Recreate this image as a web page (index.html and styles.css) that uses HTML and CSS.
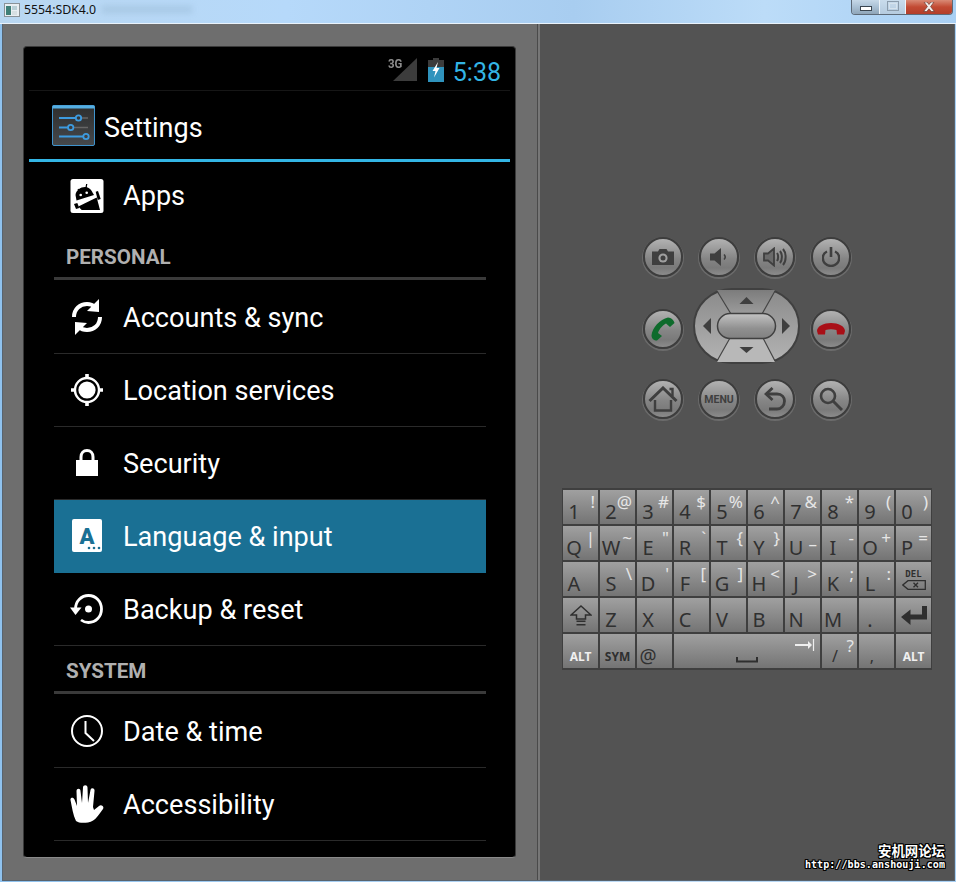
FILE: index.html
```html
<!DOCTYPE html>
<html lang="en">
<head>
    <meta charset="UTF-8">
    <meta name="viewport" content="width=device-width, initial-scale=1.0">
    <title>5554:SDK4.0</title>
    <link rel="stylesheet" href="styles.css">
</head>
<body>

<!-- Window title bar -->
<header class="titlebar">
    <svg class="app-icon" width="16" height="16" viewBox="0 0 16 16"><rect x="0.5" y="1.5" width="15" height="13" fill="#e8eef2" stroke="#8a9298"/><rect x="2" y="4" width="5" height="9" fill="#3f7f78"/><rect x="8" y="4" width="5" height="4" fill="#b9cfd6"/><rect x="8" y="9" width="5" height="4" fill="#d6dfe2"/></svg>
    <span class="title-text">5554:SDK4.0</span>
    <span class="title-smudge"></span>
    <div class="win-buttons">
        <div class="win-btn win-min"><span class="min-glyph"></span></div>
        <div class="win-btn win-max"><span class="max-glyph"></span></div>
        <div class="win-btn win-close">
            <svg width="14" height="10" viewBox="0 0 14 10"><path d="M2 0 L5 0 L7 2.5 L9 0 L12 0 L8.6 4.6 L12.4 9.5 L9.2 9.5 L7 6.8 L4.8 9.5 L1.6 9.5 L5.4 4.6 Z" fill="#f4f0ee" stroke="#6b3a30" stroke-width="0.7"/></svg>
        </div>
    </div>
</header>

<div class="window">

    <!-- Device screen -->
    <section class="device">
        <div class="screen">
            <div class="statusbar">
                <span class="net-label">3G</span>
                <svg class="signal" width="24" height="23" viewBox="0 0 24 23"><path d="M0 23 L24 0 L24 23 Z" fill="#3c3c3c"/></svg>
                <svg class="battery" width="16" height="24" viewBox="0 0 16 24"><path d="M5 0 H11 V2 H16 V24 H0 V2 H5 Z" fill="#3c3c3c"/><path d="M0 9 H16 V24 H0 Z" fill="#2f93bd"/><path d="M10 4 L4.5 13 H7.5 L6 19.5 L11.5 10 H8.5 Z" fill="#fff"/></svg>
                <span class="clock">5:38</span>
            </div>

            <div class="actionbar">
                <svg class="settings-icon" width="43" height="41" viewBox="0 0 43 41">
                    <defs><linearGradient id="setbg" x1="0" y1="0" x2="0" y2="1"><stop offset="0" stop-color="#2e2e2e"/><stop offset="1" stop-color="#45484b"/></linearGradient></defs>
                    <rect x="0.5" y="0.5" width="42" height="40" rx="1.5" fill="url(#setbg)" stroke="#3f93cc"/>
                    <rect x="0.5" y="0.5" width="42" height="3" fill="#55aee2"/>
                    <g stroke="#666" stroke-width="1.400"><path d="M29 13 H36"/><path d="M21 22.500 H36"/></g>
                    <g stroke="#3d9be0" stroke-width="1.800" fill="none">
                        <path d="M7 13 H24"/><path d="M7 22.500 H16"/><path d="M7 31.500 H32"/>
                        <circle cx="26.500" cy="13" r="2.700"/><circle cx="18.700" cy="22.500" r="2.700"/><circle cx="34" cy="31.500" r="2.700"/>
                    </g>
                </svg>
                <span class="actionbar-title">Settings</span>
            </div>

            <div class="list">
                <div class="row row-first">
                    <svg class="row-icon" width="34" height="34" viewBox="0 0 34 34">
                        <rect x="0.500" y="0" width="33" height="34" rx="2.500" fill="#fff"/>
                        <path d="M6.500 21.500 L5.500 16 C6 11.500 10.500 8 15 8 C18.500 8 21.500 10.500 22.500 13.500 L24 16 Z" fill="#000"/>
                        <path d="M8.300 27.500 L26.700 18.500 L30 31 H11.700 Z" fill="#000"/>
                        <path d="M25.700 12.700 L28 12 L30.700 20 L27.700 21 Z" fill="#000"/>
                        <path d="M4 25 L7.300 24 L9.300 29 L6 30 Z" fill="#000"/>
                        <path d="M8 10 L10 13 M16.700 5 L16 9" stroke="#000" stroke-width="1.300"/>
                        <circle cx="10.700" cy="16" r="1.300" fill="#fff"/><circle cx="16.700" cy="13.700" r="1.300" fill="#fff"/>
                    </svg>
                    <span class="row-label row-label-first">Apps</span>
                </div>

                <div class="list-header list-header-first">PERSONAL</div>

                <div class="row">
                    <svg class="row-icon" width="34" height="36" viewBox="0 0 34 36">
                        <path d="M4 18 C4 10 10 5 17 5 C20 5 23 6 25 8" fill="none" stroke="#fff" stroke-width="4"/>
                        <path d="M29 0 L29 13 L17 12 Z" fill="#fff"/>
                        <path d="M30 18 C30 26 24 31 17 31 C14 31 11 30 9 28" fill="none" stroke="#fff" stroke-width="4"/>
                        <path d="M5 36 L5 23 L17 24 Z" fill="#fff"/>
                    </svg>
                    <span class="row-label">Accounts &amp; sync</span>
                </div>
                <div class="row">
                    <svg class="row-icon" width="34" height="34" viewBox="0 0 34 34">
                        <circle cx="17" cy="17" r="12" fill="none" stroke="#fff" stroke-width="2.400"/>
                        <circle cx="17" cy="17" r="8.600" fill="#fff"/>
                        <path d="M17 1 V6 M17 28 V33 M1 17 H6 M28 17 H33" stroke="#fff" stroke-width="3.600"/>
                    </svg>
                    <span class="row-label">Location services</span>
                </div>
                <div class="row">
                    <svg class="row-icon" width="34" height="30" viewBox="0 0 34 30">
                        <path d="M11 14 V9 C11 5 13.500 2.500 17 2.500 C20.500 2.500 23 5 23 9 V14" fill="none" stroke="#fff" stroke-width="3"/>
                        <rect x="6" y="12" width="22" height="16" fill="#fff"/>
                    </svg>
                    <span class="row-label">Security</span>
                </div>
                <div class="row row-active">
                    <svg class="row-icon" width="34" height="34" viewBox="0 0 34 34">
                        <rect x="2" y="0" width="30" height="33" rx="2" fill="#fff"/>
                        <text x="17" y="25" class="lang-glyph">A</text>
                        <circle cx="19" cy="29" r="1.300" fill="#1a7094"/><circle cx="24" cy="29" r="1.300" fill="#1a7094"/><circle cx="29" cy="29" r="1.300" fill="#1a7094"/>
                    </svg>
                    <span class="row-label">Language &amp; input</span>
                </div>
                <div class="row">
                    <svg class="row-icon" width="34" height="32" viewBox="0 0 34 32">
                        <path d="M5.500 16 C5.500 8 11.500 2.500 18.500 2.500 C26 2.500 31.500 8.500 31.500 16 C31.500 23.500 26 29.500 18.500 29.500 C15.500 29.500 13 28.500 11 27" fill="none" stroke="#fff" stroke-width="2.800"/>
                        <path d="M0 14.500 H11.500 L5.500 22 Z" fill="#fff"/>
                        <circle cx="18.500" cy="16" r="3.500" fill="#fff"/>
                    </svg>
                    <span class="row-label">Backup &amp; reset</span>
                </div>

                <div class="list-header">SYSTEM</div>

                <div class="row">
                    <svg class="row-icon" width="34" height="34" viewBox="0 0 34 34">
                        <circle cx="17" cy="17" r="15" fill="none" stroke="#fff" stroke-width="2"/>
                        <path d="M15.500 7 V19 L24 27" fill="none" stroke="#fff" stroke-width="2"/>
                    </svg>
                    <span class="row-label">Date &amp; time</span>
                </div>
                <div class="row">
                    <svg class="row-icon" width="34" height="38" viewBox="0 0 34 38">
                        <path d="M6 36 C3 30 2 22 0.500 15 C0 12.500 3.500 12 4.500 14.500 L7 21 L6.500 6 C6.500 3 10.500 3 10.500 6 L12 18 L13 2.500 C13 -0.500 17.500 -0.500 17.500 2.500 L18 18 L20.500 5 C21 2 25 3 24.500 6 L23 22 L24 25 L29 21 C31.500 19 34.500 22 33 24 C29 29 26 36 18 37.500 C13 38.200 8.500 38 6 36 Z" fill="#fff"/>
                    </svg>
                    <span class="row-label">Accessibility</span>
                </div>
            </div>
        </div>
    </section>

    <!-- Emulator hardware controls -->
    <section class="controls">
        <div class="hw-buttons">
            <div class="hw-btn">
                <svg width="22" height="16" viewBox="0 0 22 16"><path d="M0 2.500 H6 L7.500 0 H14.500 L16 2.500 H22 V16 H0 Z" fill="#3f3f3f"/><circle cx="11" cy="9" r="4.600" fill="#a0a0a0"/><circle cx="11" cy="9" r="2.500" fill="#3f3f3f"/></svg>
            </div>
            <div class="hw-btn">
                <svg width="18" height="18" viewBox="0 0 18 18"><path d="M0 5.500 H4.500 L11 0 V18 L4.500 12.500 H0 Z" fill="#3f3f3f"/><path d="M14 6.500 C15.500 8 15.500 10 14 11.500" fill="none" stroke="#3f3f3f" stroke-width="1.500"/></svg>
            </div>
            <div class="hw-btn">
                <svg width="24" height="20" viewBox="0 0 24 20"><path d="M1 6.500 H5 L11 1.500 V18.500 L5 13.500 H1 Z" fill="#6a6a6a" stroke="#3f3f3f" stroke-width="1.800"/><path d="M14 6 C15.500 8 15.500 12 14 14 M17 4 C19.500 7 19.500 13 17 16 M20 2 C23.500 6 23.500 14 20 18" fill="none" stroke="#3f3f3f" stroke-width="2"/></svg>
            </div>
            <div class="hw-btn">
                <svg width="18" height="20" viewBox="0 0 18 20"><path d="M5 4.500 C1.500 6 0.800 9 0.800 11 C0.800 15.500 4.500 19 9 19 C13.500 19 17.200 15.500 17.200 11 C17.200 9 16.500 6 13 4.500" fill="none" stroke="#3f3f3f" stroke-width="2.400"/><path d="M9 0 V10" stroke="#3f3f3f" stroke-width="2.600"/></svg>
            </div>

            <div class="hw-btn">
                <svg width="24" height="24" viewBox="0 0 24 24"><path d="M17 0.500 C20 0.800 23 3 23.500 6 L19 10 L15 6.500 C13 7 8 12 7 16 L11 19 L6 23.500 C3 23.500 0.500 21.500 0.500 18.500 C1 11 9 2 17 0.500 Z" fill="#0e6b2c"/></svg>
            </div>
            <div class="dpad">
                <svg width="107" height="76" viewBox="0 0 107 76">
                    <defs>
                        <linearGradient id="dpadbg" x1="0" y1="0" x2="0" y2="1"><stop offset="0" stop-color="#8a8a8a"/><stop offset="1" stop-color="#b4b4b4"/></linearGradient>
                        <linearGradient id="dpadtop" x1="0" y1="0" x2="0" y2="1"><stop offset="0" stop-color="#7c7c7c"/><stop offset="1" stop-color="#9c9c9c"/></linearGradient>
                        <linearGradient id="pill" x1="0" y1="0" x2="0" y2="1"><stop offset="0" stop-color="#c4c4c4"/><stop offset="0.600" stop-color="#909090"/><stop offset="1" stop-color="#808080"/></linearGradient>
                    </defs>
                    <rect x="1" y="1" width="105" height="74" rx="38" ry="37" fill="url(#dpadbg)" stroke="#404040" stroke-width="2"/>
                    <path d="M24 2 H82 L69 26 H38 Z" fill="url(#dpadtop)"/>
                    <path d="M37 50 H70 L82 74 H24 Z" fill="#b8b8b8"/>
                    <path d="M24 3 L38 26 M82 3 L69 26 M37 50 L24 73 M70 50 L82 73" stroke="#454545" stroke-width="1.200" fill="none"/>
                    <rect x="24.500" y="25.500" width="58" height="25" rx="12.500" fill="url(#pill)" stroke="#404040" stroke-width="1.500"/>
                    <path d="M46.500 16 L53.500 9 L60.500 16 Z" fill="#3f3f3f"/>
                    <path d="M46.500 59 H60.500 L53.500 65 Z" fill="#3f3f3f"/>
                    <path d="M18 30 L10 38 L18 46 Z" fill="#3f3f3f"/>
                    <path d="M89 30 L97 38 L89 46 Z" fill="#3f3f3f"/>
                </svg>
            </div>
            <div class="hw-btn">
                <svg width="28" height="12" viewBox="0 0 28 12"><path d="M0 8 C0 3 7 0 14 0 C21 0 28 3 28 8 L27 11.500 L20 11.500 L19.500 7 C16 6 12 6 8.500 7 L8 11.500 L1 11.500 Z" fill="#a90f17"/></svg>
            </div>

            <div class="hw-btn">
                <svg width="30" height="26" viewBox="0 0 30 26"><path d="M1.500 15 L15 2 L28.500 15" fill="none" stroke="#3f3f3f" stroke-width="3"/><path d="M7 14 V24.500 H23 V14" fill="none" stroke="#3f3f3f" stroke-width="2.400"/><path d="M21.500 3 H24.500 V10" fill="none" stroke="#3f3f3f" stroke-width="2.400"/></svg>
            </div>
            <div class="hw-btn"><span class="menu-label">MENU</span></div>
            <div class="hw-btn">
                <svg width="22" height="24" viewBox="0 0 22 24"><path d="M2 7 H13 C18 7 20.500 10.500 20.500 14 C20.500 18.500 17 22 13 22 H5" fill="none" stroke="#3f3f3f" stroke-width="2.800"/><path d="M8.500 1 L2 7 L8.500 13" fill="none" stroke="#3f3f3f" stroke-width="2.800"/></svg>
            </div>
            <div class="hw-btn">
                <svg width="24" height="24" viewBox="0 0 24 24"><circle cx="9" cy="9" r="7" fill="none" stroke="#3f3f3f" stroke-width="2.600"/><path d="M14 14 L23 23" stroke="#3f3f3f" stroke-width="3"/></svg>
            </div>
        </div>

        <div class="keyboard">
            <div class="key"><span class="k-main">1</span><span class="k-sup">!</span></div>
            <div class="key"><span class="k-main">2</span><span class="k-sup">@</span></div>
            <div class="key"><span class="k-main">3</span><span class="k-sup">#</span></div>
            <div class="key"><span class="k-main">4</span><span class="k-sup">$</span></div>
            <div class="key"><span class="k-main">5</span><span class="k-sup">%</span></div>
            <div class="key"><span class="k-main">6</span><span class="k-sup">^</span></div>
            <div class="key"><span class="k-main">7</span><span class="k-sup">&amp;</span></div>
            <div class="key"><span class="k-main">8</span><span class="k-sup">*</span></div>
            <div class="key"><span class="k-main">9</span><span class="k-sup">(</span></div>
            <div class="key"><span class="k-main">0</span><span class="k-sup">)</span></div>

            <div class="key"><span class="k-main">Q</span><span class="k-sup">|</span></div>
            <div class="key"><span class="k-main">W</span><span class="k-sup">~</span></div>
            <div class="key"><span class="k-main">E</span><span class="k-sup">"</span></div>
            <div class="key"><span class="k-main">R</span><span class="k-sup">`</span></div>
            <div class="key"><span class="k-main">T</span><span class="k-sup">{</span></div>
            <div class="key"><span class="k-main">Y</span><span class="k-sup">}</span></div>
            <div class="key"><span class="k-main">U</span><span class="k-sup k-mid">–</span></div>
            <div class="key"><span class="k-main">I</span><span class="k-sup">-</span></div>
            <div class="key"><span class="k-main">O</span><span class="k-sup">+</span></div>
            <div class="key"><span class="k-main">P</span><span class="k-sup">=</span></div>

            <div class="key"><span class="k-main">A</span></div>
            <div class="key"><span class="k-main">S</span><span class="k-sup">\</span></div>
            <div class="key"><span class="k-main">D</span><span class="k-sup">'</span></div>
            <div class="key"><span class="k-main">F</span><span class="k-sup">[</span></div>
            <div class="key"><span class="k-main">G</span><span class="k-sup">]</span></div>
            <div class="key"><span class="k-main">H</span><span class="k-sup">&lt;</span></div>
            <div class="key"><span class="k-main">J</span><span class="k-sup">&gt;</span></div>
            <div class="key"><span class="k-main">K</span><span class="k-sup">;</span></div>
            <div class="key"><span class="k-main">L</span><span class="k-sup">:</span></div>
            <div class="key key-icon key-del">
                <span class="del-label">DEL</span>
                <svg width="24" height="10" viewBox="0 0 24 10"><path d="M6 0.700 H23.300 V9.300 H6 L0.800 5 Z" fill="none" stroke="#2f2f2f" stroke-width="1.300"/><path d="M11.500 2.800 L16 7.200 M16 2.800 L11.500 7.200" stroke="#2f2f2f" stroke-width="1.400"/></svg>
            </div>

            <div class="key key-icon">
                <svg width="22" height="21" viewBox="0 0 22 21"><path d="M11 1 L21 10 H15.500 V14 H6.500 V10 H1 Z" fill="none" stroke="#2f2f2f" stroke-width="1.500"/><path d="M6.500 16.200 H15.500 M6.500 19.800 H15.500" stroke="#2f2f2f" stroke-width="1.500"/></svg>
            </div>
            <div class="key"><span class="k-main">Z</span></div>
            <div class="key"><span class="k-main">X</span></div>
            <div class="key"><span class="k-main">C</span></div>
            <div class="key"><span class="k-main">V</span></div>
            <div class="key"><span class="k-main">B</span></div>
            <div class="key"><span class="k-main">N</span></div>
            <div class="key"><span class="k-main">M</span></div>
            <div class="key"><span class="k-main">.</span></div>
            <div class="key key-icon">
                <svg width="26" height="19" viewBox="0 0 26 19"><path d="M21 0 H26 V13.500 H9.500 V19 L0 11 L9.500 3.500 V8.500 H21 Z" fill="#2f2f2f"/></svg>
            </div>

            <div class="key key-label"><span>ALT</span></div>
            <div class="key key-label key-sym"><span>SYM</span></div>
            <div class="key"><span class="k-main k-at">@</span></div>
            <div class="key key-space">
                <svg class="tab-arrow" width="20" height="12" viewBox="0 0 20 12"><path d="M0 5 H13 V2 L17 6 L13 10 V7 H0 Z" fill="#eee"/><path d="M18.500 0 V12" stroke="#eee" stroke-width="1.200"/></svg>
                <svg class="space-glyph" width="22" height="6" viewBox="0 0 22 6"><path d="M1 0 V4.500 H21 V0" fill="none" stroke="#2f2f2f" stroke-width="2"/></svg>
            </div>
            <div class="key"><span class="k-main k-small">/</span><span class="k-sup">?</span></div>
            <div class="key"><span class="k-main k-small">,</span></div>
            <div class="key key-label"><span>ALT</span></div>
        </div>
    </section>
</div>

<!-- Forum watermark -->
<div class="watermark">
    <div class="wm-name">安机网论坛</div>
    <div class="wm-url">http://bbs.anshouji.com</div>
</div>

</body>
</html>
```

FILE: styles.css
```css
* {
    box-sizing: border-box;
}

html, body {
    margin: 0;
    padding: 0;
}

body {
    width: 956px;
    height: 882px;
    overflow: hidden;
    position: relative;
    display: flex;
    flex-direction: column;
    background: linear-gradient(90deg, #8fc2ee, #a9d0f3 40%, #c0dcf6 70%, #a8d0f4);
    font-family: 'Roboto', sans-serif;
}

/* title bar */
.titlebar {
    height: 24px;
    flex: none;
    display: flex;
    align-items: flex-start;
    padding: 1px 3px 0 4px;
    background: linear-gradient(90deg, #b9d7f1 0, #b6d9fa 30%, #a8cdf0 60%, #bcdcf8 80%, #a9d0f4 100%);
    border-bottom: 1px solid #eaf3fb;
}

.app-icon {
    margin-top: 1px;
}

.title-text {
    margin-left: 4px;
    margin-top: 2px;
    font-family: 'Noto Sans', sans-serif;
    font-size: 12.300px;
    line-height: 14px;
    color: #111;
}

.title-smudge {
    width: 90px;
    height: 7px;
    margin: 5px 0 0 6px;
    background: rgba(110, 140, 170, 0.22);
    filter: blur(3px);
}

.win-buttons {
    margin-left: auto;
    margin-top: -1px;
    display: flex;
    height: 15px;
    border: 1px solid #5d6a78;
    border-top: none;
    border-radius: 0 0 4px 4px;
    overflow: hidden;
}

.win-btn {
    display: flex;
    align-items: center;
    justify-content: center;
    border-right: 1px solid #eef4f9;
}

.win-min {
    width: 28px;
    background: linear-gradient(#c6d8e8, #a9c0d4 50%, #8fa5b8);
}

.win-max {
    width: 26px;
    background: linear-gradient(#c9dcec, #b5cbdf);
}

.win-close {
    width: 46px;
    border-right: none;
    background: linear-gradient(#d98a75, #c24a33 50%, #b33e2a);
}

.min-glyph {
    width: 12px;
    height: 5px;
    margin-top: 3px;
    background: #fff;
    border: 1px solid #3a4550;
}

.max-glyph {
    width: 12px;
    height: 10px;
    border: 1px solid #8b9cac;
    outline: 1px solid #d5e2ed;
    outline-offset: -3px;
    margin-top: -3px;
}

/* main window */
.window {
    flex: 1;
    display: flex;
    margin: 0 1px 2px 2px;
    background: #535353;
    border: 1px solid #58636e;
    border-top: none;
}

.device {
    width: 535px;
    flex: none;
    padding: 22px 20px;
    background: #6e6e6e;
    border-right: 1px solid #4a4a4a;
}

.controls {
    flex: 1;
    display: flex;
    flex-direction: column;
    align-items: center;
    padding-top: 197px;
    border-left: 2px solid #777;
}

/* android screen */
.screen {
    width: 493px;
    height: 812px;
    padding: 0 5px;
    background: #000;
    border-radius: 4px;
    border: 1px solid #3a3a3a;
    border-bottom-color: #8a8a8a;
    overflow: hidden;
}

.statusbar {
    height: 44px;
    display: flex;
    align-items: center;
    justify-content: flex-end;
    padding: 0 9px 0 0;
    border-bottom: 1px solid #161616;
    position: relative;
}

.net-label {
    position: absolute;
    right: 107px;
    top: 9px;
    font-size: 13px;
    font-weight: bold;
    color: #8d8d8d;
    transform: scaleX(0.88);
}

.signal {
    margin-right: 11px;
    margin-top: 2px;
}

.battery {
    margin-right: 9px;
    margin-top: 2px;
}

.clock {
    font-size: 25px;
    line-height: 30px;
    color: #33b5e5;
    margin-top: 9px;
}

.actionbar {
    height: 71px;
    display: flex;
    align-items: center;
    padding: 1px 0 0 23px;
    border-bottom: 3px solid #33b5e5;
}

.settings-icon {
    margin-right: 9px;
}

.actionbar-title {
    font-size: 27px;
    color: #fff;
    margin-top: 4px;
}

.list {
    margin: 0 24px 0 25px;
}

.row {
    height: 73px;
    display: flex;
    align-items: center;
    padding-left: 16px;
    border-bottom: 1px solid #2a2a2a;
}

.row-first {
    height: 68px;
    border-bottom: none;
}

.row-active {
    background: #1a7094;
    border-bottom-color: #1a7094;
}

.row-icon {
    width: 34px;
    flex: none;
    margin-right: 19px;
}

.row-label {
    font-size: 27.100px;
    color: #fff;
    padding-top: 1px;
}

.row-label-first {
    padding-top: 0;
}

.lang-glyph {
    font-family: 'Roboto', sans-serif;
    font-size: 22px;
    font-weight: 900;
    fill: #1a7094;
    text-anchor: middle;
}

.list-header {
    height: 48px;
    margin-bottom: 1px;
    padding: 0 0 8px 12px;
    display: flex;
    align-items: flex-end;
    font-size: 20.600px;
    font-weight: bold;
    color: #b0b0b0;
    border-bottom: 3px solid #3a3a3a;
}

.list-header-first {
    height: 50px;
}

/* hardware buttons */
.hw-buttons {
    display: grid;
    grid-template-columns: repeat(4, 56px);
    grid-template-rows: 72px 72px 68px;
    justify-items: center;
    align-items: center;
    margin-bottom: 55px;
}

.hw-btn {
    width: 40px;
    height: 40px;
    display: flex;
    align-items: center;
    justify-content: center;
    border-radius: 50%;
    background: linear-gradient(#b2b2b2, #858585 55%, #7a7a7a 80%, #8c8c8c);
    border: 2px solid #3d3d3d;
    box-shadow: 0 1px 0 1px #6b6b6b;
}

.dpad {
    grid-column: span 2;
    height: 76px;
    margin: 0 2px 7px 0;
}

.dpad svg {
    display: block;
}

.menu-label {
    font-size: 10.500px;
    font-weight: bold;
    color: #3f3f3f;
}

/* keyboard */
.keyboard {
    display: grid;
    grid-template-columns: repeat(10, 35px);
    grid-auto-rows: 34px;
    gap: 2px;
    padding: 2px 1px;
    background: #3f3f3f;
    font-family: 'Noto Sans', sans-serif;
}

.key {
    display: grid;
    background: linear-gradient(#a0a0a0, #747474);
}

.k-main {
    grid-area: 1 / 1;
    align-self: end;
    justify-self: start;
    width: 22px;
    text-align: center;
    font-size: 20px;
    line-height: 24px;
    color: #303030;
}

.k-small {
    font-size: 16px;
    width: 26px;
}

.k-at {
    font-size: 19px;
    width: 22px;
}

.k-sup {
    grid-area: 1 / 1;
    align-self: start;
    justify-self: end;
    padding-right: 3px;
    font-size: 17px;
    line-height: 23px;
    color: #e6e6e6;
}

.k-mid {
    margin-top: 6px;
}

.key-icon {
    display: flex;
    align-items: center;
    justify-content: center;
}

.key-del {
    flex-direction: column;
    gap: 1px;
}

.del-label {
    font-family: 'DejaVu Sans Mono', monospace;
    font-size: 9px;
    line-height: 10px;
    font-weight: bold;
    color: #2f2f2f;
}

.key-label {
    display: flex;
    align-items: flex-end;
    justify-content: center;
    padding-bottom: 3px;
    font-size: 12px;
    font-weight: bold;
    color: #f0f0f0;
}

.key-sym {
    color: #2f2f2f;
}

.key-space {
    grid-column: span 4;
    display: block;
    position: relative;
}

.tab-arrow {
    position: absolute;
    right: 5px;
    top: 5px;
}

.space-glyph {
    position: absolute;
    left: 62px;
    bottom: 5px;
}

/* watermark */
.watermark {
    position: absolute;
    right: 11px;
    bottom: 10px;
    text-align: right;
    color: #fff;
    font-weight: bold;
    text-shadow: 1px 0 0 #000, -1px 0 0 #000, 0 1px 0 #000, 0 -1px 0 #000, 1px 1px 0 #000, -1px -1px 0 #000, 1px -1px 0 #000, -1px 1px 0 #000;
}

.wm-name {
    font-family: 'Noto Sans CJK SC', sans-serif;
    font-size: 13.400px;
    line-height: 15px;
}

.wm-url {
    font-family: 'DejaVu Sans Mono', monospace;
    font-size: 10px;
    letter-spacing: 0.070px;
    line-height: 14px;
}
```
